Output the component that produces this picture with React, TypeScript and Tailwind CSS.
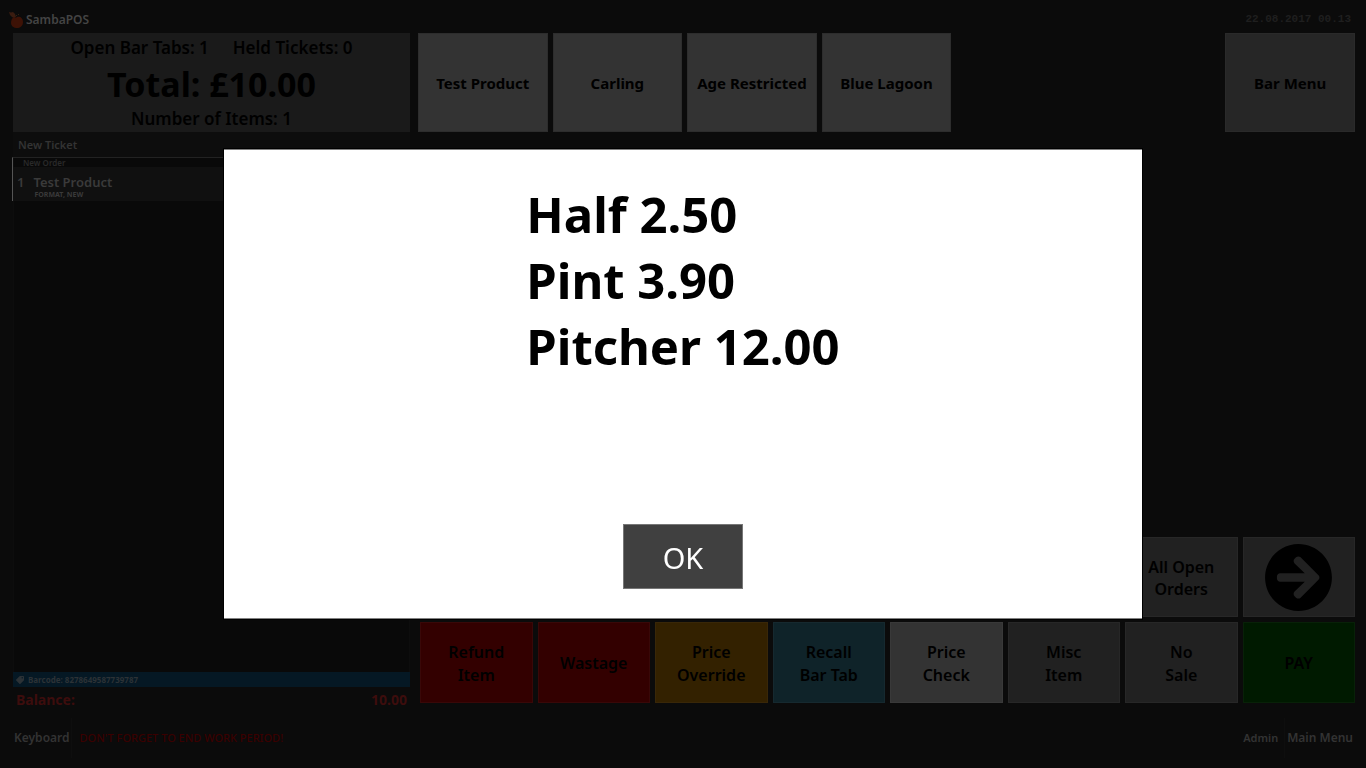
import { FaArrowCircleRight, FaTag } from 'react-icons/fa';

const products = ['Test Product', 'Carling', 'Age Restricted', 'Blue Lagoon'];

const commands = [
    { lines: ['Refund', 'Item'], color: 'bg-[#330000]' },
    { lines: ['Wastage'], color: 'bg-[#330000]' },
    { lines: ['Price', 'Override'], color: 'bg-[#332100]' },
    { lines: ['Recall', 'Bar Tab'], color: 'bg-[#0f2329]' },
    { lines: ['Price', 'Check'], color: 'bg-[#333333]' },
    { lines: ['Misc', 'Item'], color: 'bg-[#212121]' },
    { lines: ['No', 'Sale'], color: 'bg-[#212121]' },
    { lines: ['PAY'], color: 'bg-[#001a00]' },
];

const prices = ['Half 2.50', 'Pint 3.90', 'Pitcher 12.00'];

function Logo() {
    return (
        <svg viewBox="0 0 16 18" className="w-4 h-[18px]" aria-hidden="true">
            <path d="M0 1l2 .5 2-.5 2 2 1 3-2 1-2-1-2-2z" fill="#3a1c10" />
            <path d="M5 6c1 1 2 1 3 0 3-1 6 1 6 5s-3 6-6 6-6-2-6-5c0-3 1-5 3-6z" fill="#3d1206" />
            <path d="M7 4l1 1M9 4l1-1" stroke="#33200f" strokeWidth="1" />
        </svg>
    );
}

function CommandButton({ lines, color }: { lines: string[]; color: string }) {
    return (
        <button type="button" className={`h-[81px] border border-white/3 pt-0.5 text-base leading-[23px] font-semibold text-black ${color}`}>
            {lines.map((line) => (
                <span key={line} className="block">{line}</span>
            ))}
        </button>
    );
}

function Ticket() {
    return (
        <section className="flex w-[397px] shrink-0 flex-col">
            <div className="flex h-[99px] flex-col items-center bg-[#1a1a1a] font-semibold text-black">
                <div className="flex gap-6 text-[17px] leading-[29px]">
                    <span>Open Bar Tabs: 1</span>
                    <span>Held Tickets: 0</span>
                </div>
                <div className="text-[34px] leading-[45px] font-bold">Total: £10.00</div>
                <div className="text-[17px] leading-6">Number of Items: 1</div>
            </div>
            <div className="flex-1 border-x border-[#0d0d0d] bg-[#090909] text-[#333333]">
                <div className="bg-[#0d0d0d] px-1 text-[11px] leading-[25px] font-semibold">New Ticket</div>
                <div className="-ml-0.5 border-t border-l border-t-[#222222] border-l-[#555555]">
                    <div className="pl-2.5 text-[8px] leading-[9px] font-semibold text-[#292929]">New Order</div>
                    <div className="flex h-[34px] gap-[9px] bg-[#101010] pl-1 pt-1.5 font-semibold text-[#3a3a3a]">
                        <span className="text-[13px] leading-[18px]">1</span>
                        <div>
                            <div className="text-[13px] leading-[18px]">Test Product</div>
                            <div className="pl-px text-[7px] leading-2 font-bold">FORMAT, NEW</div>
                        </div>
                    </div>
                </div>
            </div>
            <div className="flex h-[15px] items-center gap-1 bg-[#051824] px-[3px] text-[8px] font-bold text-[#2c3236]">
                <FaTag className="size-2 -scale-x-100" />
                <span>Barcode: 8278649587739787</span>
            </div>
            <div className="flex h-[31px] justify-between px-[3px] text-[14px] leading-[26px] font-bold text-[#3d0d0d]">
                <span>Balance:</span>
                <span>10.00</span>
            </div>
        </section>
    );
}

function PriceDialog() {
    return (
        <div className="fixed inset-0 flex items-center justify-center">
            <div role="dialog" aria-modal="true" className="flex h-[470px] w-[918px] flex-col items-center border-y border-[#808080] bg-white pt-[31px] pb-[29px] shadow-[0_0_0_1px_#000000]">
                <div className="flex-1 text-[49px] leading-[66px] font-bold text-black">
                    {prices.map((price) => (
                        <div key={price}>{price}</div>
                    ))}
                </div>
                <button type="button" className="h-[65px] w-[120px] border border-[#777777] bg-[#404040] pt-0.5 text-[29px] text-white">OK</button>
            </div>
        </div>
    );
}

export default function App() {
    return (
        <div className="flex min-h-screen flex-col bg-[#0b0b0b] pl-[13px] pr-[11px] font-['Noto_Sans','Open_Sans',sans-serif]">
            <header className="flex h-[33px] items-center justify-between pt-1.5 pr-1">
                <div className="-ml-1 flex items-center gap-px text-[12px] font-semibold text-[#444444]">
                    <Logo />
                    <span>SambaPOS</span>
                </div>
                <time className="font-['Liberation_Mono',monospace] text-[11px] font-bold text-[#1f1f1f]">22.08.2017 00.13</time>
            </header>

            <main className="flex flex-1 gap-2">
                <Ticket />
                <section className="flex flex-1 flex-col justify-between pb-[15px]">
                    <div className="grid grid-cols-7 gap-[5px] text-[15px] font-bold text-black">
                        {products.map((product) => (
                            <button key={product} type="button" className="h-[99px] border border-[#2d2d2d] bg-[#333333] pt-0.5 whitespace-nowrap">{product}</button>
                        ))}
                        <button type="button" className="col-start-7 h-[99px] border border-[#2a2a2a] bg-[#262626] pt-0.5">Bar Menu</button>
                    </div>
                    <div className="grid grid-cols-8 gap-[5px] pl-0.5">
                        <button type="button" className="col-start-7 h-20 border border-white/3 bg-[#212121] pt-0.5 text-base leading-[22px] font-semibold text-black">
                            All Open<br />Orders
                        </button>
                        <button type="button" aria-label="Next" className="flex h-20 items-center justify-center border border-white/3 bg-[#212121] text-black">
                            <FaArrowCircleRight className="size-[69px]" />
                        </button>
                        {commands.map((command) => (
                            <CommandButton key={command.lines.join(' ')} {...command} />
                        ))}
                    </div>
                </section>
            </main>

            <footer className="flex h-[50px] items-center justify-between pb-2.5 text-[12px] font-semibold text-[#333333]">
                <div className="flex items-center gap-2">
                    <button type="button" className="h-10 border-r border-[#0e0e0e] px-px">Keyboard</button>
                    <span className="text-[11px] font-medium text-[#3a0000]">DON'T FORGET TO END WORK PERIOD!</span>
                </div>
                <div className="flex items-center gap-1.5">
                    <span className="text-[11px]">Admin</span>
                    <button type="button" className="h-10 border-l border-[#0e0e0e] px-0.5">Main Menu</button>
                </div>
            </footer>

            <PriceDialog />
        </div>
    );
}
